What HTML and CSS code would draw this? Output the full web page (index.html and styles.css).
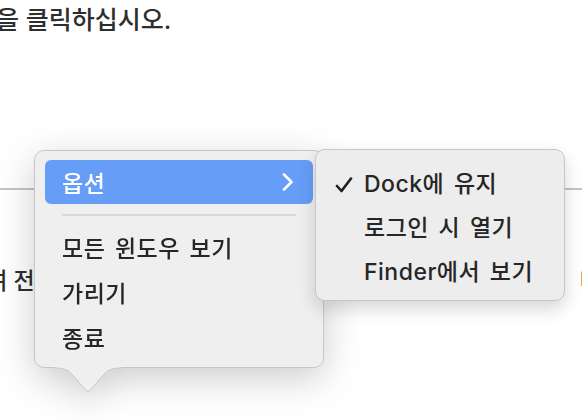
FILE: index.html
```html
<!DOCTYPE html>
<html lang="ko">
<head>
<meta charset="utf-8">
<title>Dock 메뉴</title>
<link rel="stylesheet" href="styles.css">
</head>
<body>
<main class="page">
  <p class="intro"><span class="cut-left">아이콘을</span> 클릭하십시오.</p>
  <hr class="rule">
  <p class="body-line"><span class="left-text">하여 전체 화면</span><span class="right-text">버튼</span></p>

  <div class="dock-menu">
    <div class="menu main-menu">
      <div class="item active">
        <span>옵션</span>
        <svg class="chev" width="12" height="18" viewBox="0 0 12 18"><path d="M2 1.5 L9.5 9 L2 16.5" fill="none" stroke="#fff" stroke-width="2.6" stroke-linecap="round" stroke-linejoin="round"/></svg>
      </div>
      <div class="sep"></div>
      <div class="item">모든 윈도우 보기</div>
      <div class="item">가리기</div>
      <div class="item">종료</div>
    </div>
    <svg class="tail" width="66" height="26" viewBox="0 0 66 26">
      <path d="M0 1 C9 1 13 2.5 19 9.5 L31 23.5 Q33 25.5 35 23.5 L47 9.5 C53 2.5 57 1 66 1 L66 0 L0 0 Z" fill="#efefef"/>
      <path d="M0 1 C9 1 13 2.5 19 9.5 L31 23.5 Q33 25.5 35 23.5 L47 9.5 C53 2.5 57 1 66 1" fill="none" stroke="#c6c6c6" stroke-width="1"/>
    </svg>
  </div>

  <div class="menu sub-menu">
    <div class="item"><svg class="check" width="18" height="16" viewBox="0 0 18 16"><path d="M2 9 L6.5 14 L16 1.5" fill="none" stroke="#1f1f1f" stroke-width="2.6" stroke-linecap="round" stroke-linejoin="round"/></svg><span>Dock에 유지</span></div>
    <div class="item">로그인 시 열기</div>
    <div class="item">Finder에서 보기</div>
  </div>
</main>
</body>
</html>
```
FILE: styles.css
```css
* { box-sizing: border-box; }
html, body { margin: 0; padding: 0; }
body {
  width: 582px;
  height: 420px;
  overflow: hidden;
  background: #ffffff;
  font-family: "Inter", "Noto Sans CJK KR", sans-serif;
  color: #262626;
}
.page {
  position: relative;
  height: 420px;
  overflow: hidden;
}
.intro {
  margin: 0;
  padding-top: 3px;
  font-size: 25px;
  font-weight: 500;
  line-height: 34px;
  color: #2e2e2e;
  white-space: nowrap;
  margin-left: -73px;
}
.rule {
  margin: 151px 0 0 0;
  border: 0;
  border-top: 2px solid #c4c4c4;
  height: 0;
}
.body-line {
  display: flex;
  justify-content: space-between;
  margin: 76px 0 0 0;
  font-size: 23px;
  font-weight: 500;
  line-height: 30px;
  color: #2e2e2e;
  white-space: nowrap;
}
.left-text { margin-left: -35px; }
.right-text { margin-right: -40px; }

.dock-menu {
  position: absolute;
  left: 34px;
  top: 150px;
  width: 290px;
  filter: drop-shadow(0 10px 18px rgba(0,0,0,0.2));
}
.menu {
  background: #efefef;
  border: 1px solid #c6c6c6;
  border-radius: 10px;
  font-size: 23px;
  font-weight: 500;
}
.main-menu {
  height: 218px;
  padding: 9px 10px 0 10px;
  display: flex;
  flex-direction: column;
}
.item {
  display: flex;
  align-items: center;
  height: 45px;
  padding: 0 17px;
  white-space: nowrap;
  letter-spacing: 0.5px;
  word-spacing: 3px;
}
.main-menu .item.active {
  height: 44px;
  background: #669df7;
  color: #ffffff;
  border-radius: 6px;
  justify-content: space-between;
  padding-right: 19px;
}
.sep {
  height: 2px;
  margin: 10px 17px 8px 17px;
  background: #d8d8d8;
}
.tail {
  position: absolute;
  left: 21px;
  top: 217px;
  display: block;
}
.sub-menu {
  position: absolute;
  left: 315px;
  top: 149px;
  width: 250px;
  height: 152px;
  padding: 10px 0 0 0;
  background: #ededed;
  box-shadow: 0 8px 18px rgba(0,0,0,0.16);
}
.sub-menu .item {
  height: 44px;
  padding-left: 48px;
  position: relative;
}
.check {
  position: absolute;
  left: 19px;
  top: 17px;
}
```
